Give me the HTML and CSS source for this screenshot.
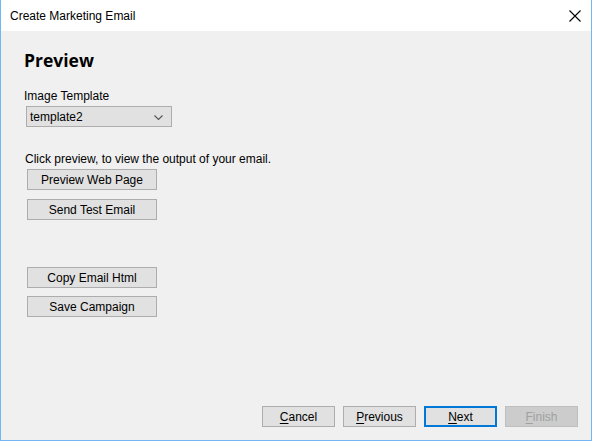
FILE: index.html
```html
<!DOCTYPE html>
<html>
<head>
<meta charset="utf-8">
<link rel="stylesheet" href="styles.css">
</head>
<body>
<div class="window">
  <div class="titlebar">
    <span class="title">Create Marketing Email</span>
    <span class="close">
      <svg width="12" height="12" viewBox="0 0 12 12"><path d="M0.5 0.5 L11.5 11.5 M11.5 0.5 L0.5 11.5" stroke="#000" stroke-width="1.1" fill="none"/></svg>
    </span>
  </div>
  <div class="content">
    <h1 class="heading">Preview</h1>
    <div class="label label-template">Image Template</div>
    <div class="select">
      <span class="select-text">template2</span>
      <svg class="chevron" width="9" height="5" viewBox="0 0 9 5"><path d="M0.5 0.5 L4.5 4.5 L8.5 0.5" stroke="#555" stroke-width="1.1" fill="none"/></svg>
    </div>
    <div class="label label-click">Click preview, to view the output of your email.</div>
    <div class="btn-group">
      <button class="btn">Preview Web Page</button>
      <button class="btn">Send Test Email</button>
    </div>
    <div class="btn-group second">
      <button class="btn">Copy Email Html</button>
      <button class="btn">Save Campaign</button>
    </div>
  </div>
  <div class="footer">
    <button class="btn wbtn"><u>C</u>ancel</button>
    <button class="btn wbtn"><u>P</u>revious</button>
    <button class="btn wbtn default"><u>N</u>ext</button>
    <button class="btn wbtn disabled"><u>F</u>inish</button>
  </div>
</div>
</body>
</html>
```

FILE: styles.css
```css
html, body {
  margin: 0;
  padding: 0;
}
body {
  font-family: "Liberation Sans", Arial, sans-serif;
  font-size: 12px;
  color: #000;
}
.window {
  width: 592px;
  height: 441px;
  box-sizing: border-box;
  border: 1px solid #72b6f6;
  border-top: none;
  background: #f0f0f0;
  display: flex;
  flex-direction: column;
}
.titlebar {
  height: 31px;
  background: #fff;
  display: flex;
  align-items: center;
  justify-content: space-between;
  padding-left: 9px;
  padding-right: 10px;
  flex-shrink: 0;
}
.title {
  font-size: 12px;
  line-height: 14px;
  margin-top: 1px;
}
.close {
  display: flex;
  margin-top: 0;
}
.content {
  flex: 1;
  display: flex;
  flex-direction: column;
  align-items: flex-start;
  padding-left: 23px;
}
.heading {
  margin: 19px 0 0 0;
  font-family: "Open Sans", sans-serif;
  font-weight: 700;
  font-size: 17.5px;
  line-height: 20px;
}
.label {
  line-height: 14px;
}
.label-template {
  margin-top: 19px;
}
.select {
  margin-top: 3px;
  margin-left: 2px;
  width: 146px;
  height: 21px;
  box-sizing: border-box;
  border: 1px solid #adadad;
  background: #e1e1e1;
  display: flex;
  align-items: center;
  justify-content: space-between;
  padding: 1px 8px 0 3px;
}
.select-text {
  line-height: 14px;
}
.label-click {
  margin-top: 25px;
  margin-left: 1px;
}
.btn-group {
  display: flex;
  flex-direction: column;
  gap: 9px;
  margin-top: 3px;
  margin-left: 3px;
}
.btn-group.second {
  margin-top: 47px;
  gap: 8px;
}
.btn {
  width: 130px;
  height: 21px;
  box-sizing: border-box;
  border: 1px solid #adadad;
  background: #e1e1e1;
  font-family: "Liberation Sans", Arial, sans-serif;
  font-size: 12px;
  color: #000;
  padding: 1px 0 0 0;
  margin: 0;
  line-height: 14px;
}
.footer {
  display: flex;
  justify-content: flex-end;
  gap: 8px;
  padding: 0 13px 13px 0;
}
.wbtn {
  width: 73px;
}
.wbtn u {
  text-underline-offset: 2px;
}
.default {
  border: 2px solid #0078d7;
}
.disabled {
  background: #cccccc;
  border-color: #bfbfbf;
  color: #a0a0a0;
}
```
